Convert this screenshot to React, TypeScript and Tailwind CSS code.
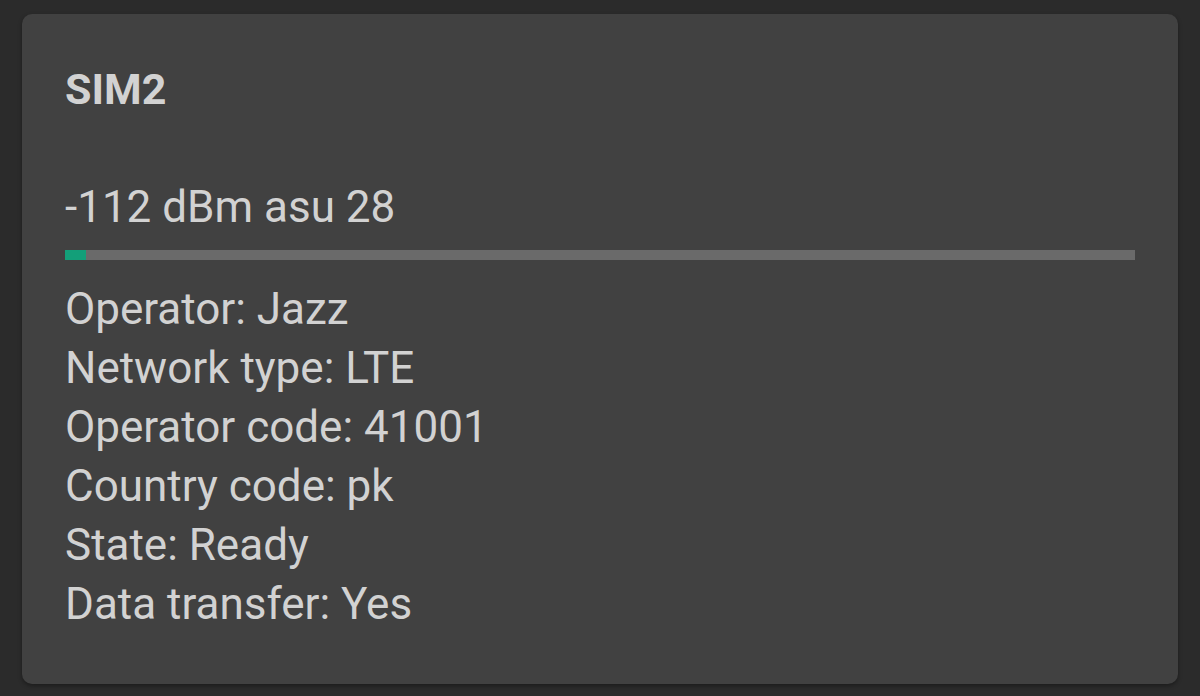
export default function App() {
  const rows = [
    "Operator: Jazz",
    "Network type: LTE",
    "Operator code: 41001",
    "Country code: pk",
    "State: Ready",
    "Data transfer: Yes",
  ];

  return (
    <div className="h-[696px] w-[1200px] bg-[#2b2b2b] px-[22px] pt-[14px] pb-[12px] font-['Roboto',sans-serif]">
      <div className="flex h-full flex-col rounded-[10px] bg-[#414141] px-[43px] pt-[49px] text-[#d2d2d2] shadow-[0_2px_4px_rgba(0,0,0,0.35)]">
        <h2 className="text-[43px] font-bold leading-[52px]">SIM2</h2>

        <p className="mt-[66px] text-[44px] leading-[52px]">-112 dBm asu 28</p>

        <div className="mt-[17px] h-[10px] w-full bg-[#6a6a6a]">
          <div className="h-full bg-[#139f79]" style={{ width: `${(28 / 1400) * 100}%` }} />
        </div>

        <div className="mt-[20px] flex flex-col">
          {rows.map((row) => (
            <p key={row} className="text-[44px] leading-[59px]">
              {row}
            </p>
          ))}
        </div>
      </div>
    </div>
  );
}
